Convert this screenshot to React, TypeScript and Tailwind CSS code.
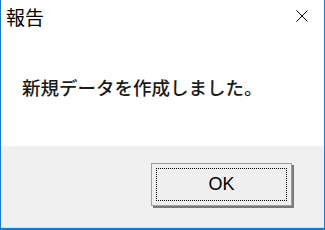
import React from 'react';

export default function App() {
  return (
    <div
      className="w-[325px] h-[230px] flex flex-col bg-white border-l border-r border-b-2 border-[#1a79c9] overflow-hidden"
      style={{ fontFamily: '"Noto Sans CJK JP", "Liberation Sans", sans-serif' }}
    >
      {/* title bar */}
      <div className="h-[32px] flex items-center justify-between pl-[5px] pr-[16px]">
        <span className="text-[19px] leading-none text-black">報告</span>
        <svg width="12" height="12" viewBox="0 0 12 12" className="text-black">
          <path d="M0.5 0.5 L11.5 11.5 M11.5 0.5 L0.5 11.5" stroke="currentColor" strokeWidth="1" fill="none" />
        </svg>
      </div>

      {/* message */}
      <div className="flex-1 bg-white flex items-start pl-[21px] pt-[46px]">
        <span className="text-[18.5px] leading-none font-medium text-[#1a1a1a]">新規データを作成しました。</span>
      </div>

      {/* footer */}
      <div className="h-[82px] bg-[#f0f0f0] flex justify-end items-start pt-[17px] pr-[32px] border-b border-[#bfe6f5]">
        <button className="w-[141px] h-[43px] bg-[#efefef] border border-[#a0a0a0] shadow-[2px_2px_0_#7a7a7a] p-[4px]">
          <div
            className="w-full h-full border border-dotted border-black flex items-center justify-center text-[18px] text-black"
            style={{ fontFamily: '"Liberation Sans", sans-serif' }}
          >
            OK
          </div>
        </button>
      </div>
    </div>
  );
}
